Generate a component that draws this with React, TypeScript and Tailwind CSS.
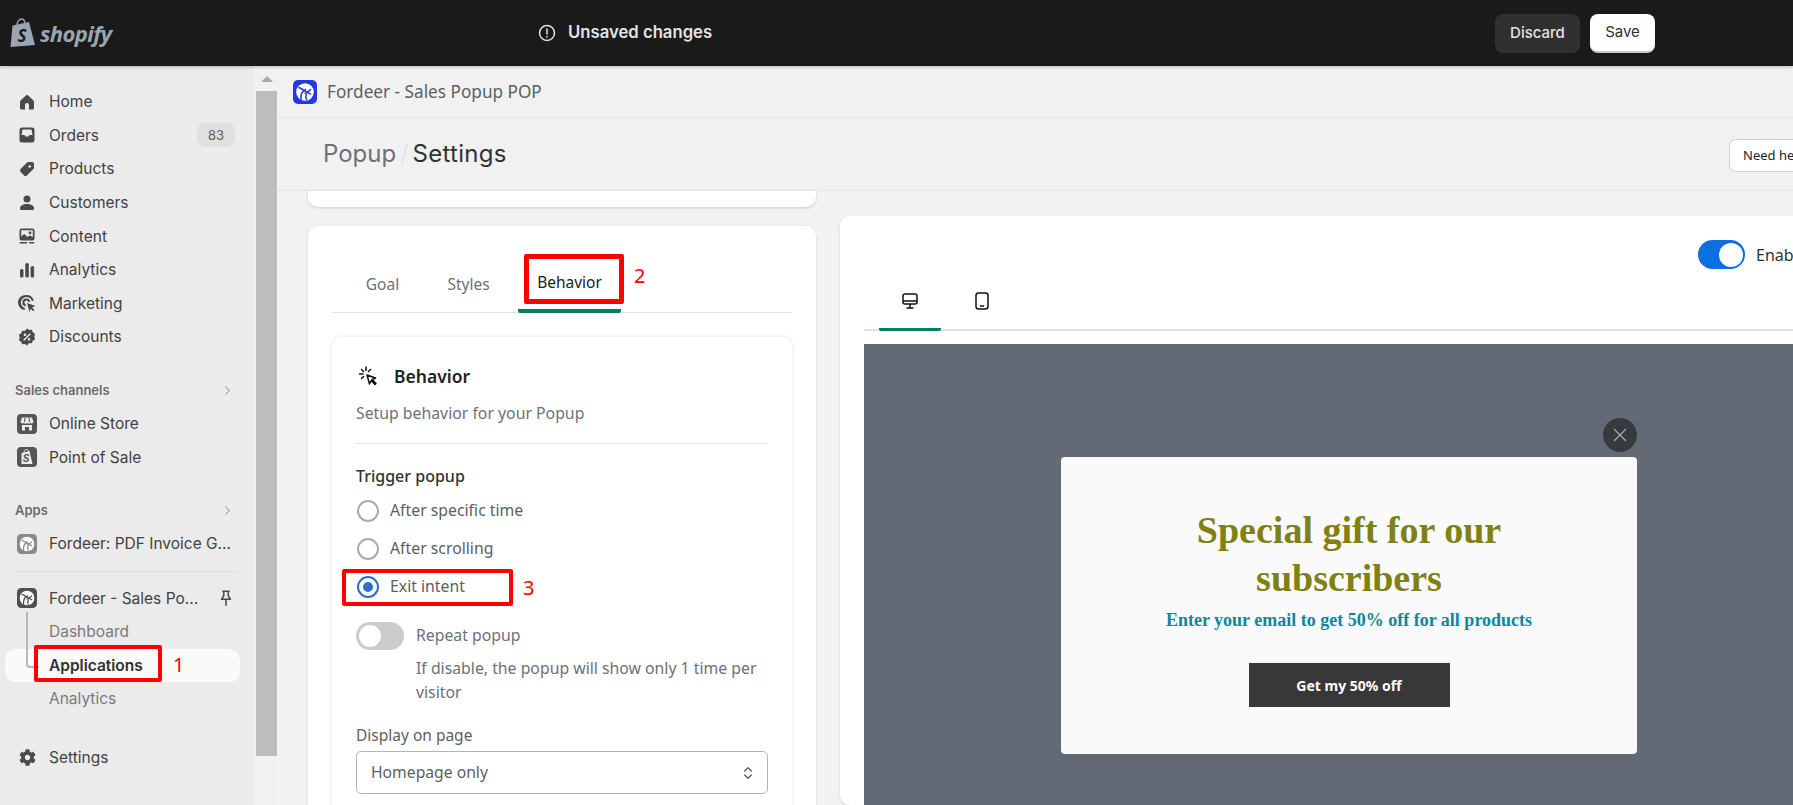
import type { ReactNode } from "react";
import { FaCog } from "react-icons/fa";
import { ChevronRight, ChevronsUpDown, X } from "lucide-react";

const inter = "font-['Inter',sans-serif]";
const noto = "font-['Noto_Sans',sans-serif]";

function Icon({ children }: { children: ReactNode }) {
  return (
    <svg viewBox="0 0 20 20" className="w-[20px] h-[20px] fill-[#4a4a4a] shrink-0">
      {children}
    </svg>
  );
}

function FordeerLogo({ bg, size = 20 }: { bg: string; size?: number }) {
  return (
    <svg viewBox="0 0 24 24" width={size} height={size} className="shrink-0">
      <rect width="24" height="24" rx="5" fill={bg} />
      <circle cx="12" cy="12" r="8.800" fill="#fff" />
      <path d="M6 7.500 17.500 14M8 20c-.5-5 1-9 4.500-10.500M12 13.500c2-1 3.500-1.500 5.500-4M13.500 14.500c-1 1.500-1 3 0 5" stroke={bg} strokeWidth="1.500" fill="none" strokeLinecap="round" />
    </svg>
  );
}

const mainNav: { label: string; icon: ReactNode; badge?: string }[] = [
  { label: "Home", icon: <Icon><path d="M10 3c-.4 0-.8.2-1.100.4L4 8c-.6.6-1 1.300-1 2.200V16c0 .8.700 1.500 1.500 1.500H8V13a2 2 0 0 1 4 0v4.500h3.500c.8 0 1.500-.7 1.500-1.500v-5.800c0-.9-.4-1.600-1-2.200l-4.900-4.600C10.800 3.200 10.400 3 10 3z" /></Icon> },
  { label: "Orders", badge: "83", icon: <Icon><path fillRule="evenodd" d="M5 2.500h10A2.500 2.500 0 0 1 17.500 5v10a2.500 2.500 0 0 1-2.500 2.500H5A2.500 2.500 0 0 1 2.500 15V5A2.500 2.500 0 0 1 5 2.500zM5.500 4.500 4.500 10h3l1 1.500h3l1-1.500h3l-1-5.500z" /></Icon> },
  { label: "Products", icon: <Icon><path fillRule="evenodd" d="M11.500 3H15a2 2 0 0 1 2 2v3.500c0 .5-.2 1-.6 1.400l-6.500 6.500a2 2 0 0 1-2.800 0L3.600 12.900a2 2 0 0 1 0-2.800l6.500-6.500c.4-.4.9-.6 1.400-.6zM14 7.500a1.300 1.300 0 1 0-2.600 0 1.300 1.300 0 0 0 2.600 0z" /></Icon> },
  { label: "Customers", icon: <Icon><circle cx="10" cy="6" r="3.500" /><path d="M3 15.500c0-2.800 3-4.500 7-4.500s7 1.700 7 4.500c0 1-.7 1.500-1.500 1.500h-11C3.700 17 3 16.500 3 15.500z" /></Icon> },
  { label: "Content", icon: <Icon><path fillRule="evenodd" d="M4.500 2.500h11A2 2 0 0 1 17.500 4.500v8a2 2 0 0 1-2 2h-11a2 2 0 0 1-2-2v-8a2 2 0 0 1 2-2zM4.200 4.200v6.300l3-2.500 3.300 3 2.300-1.800 3 2V4.200zM13 5.500a1.400 1.400 0 1 1 0 2.800 1.400 1.400 0 0 1 0-2.800z" /><rect x="2.500" y="16" width="8" height="1.600" rx=".8" /><rect x="12" y="16" width="5.500" height="1.600" rx=".8" /></Icon> },
  { label: "Analytics", icon: <Icon><rect x="3" y="9" width="3.500" height="8.500" rx="1.500" /><rect x="8.300" y="3" width="3.500" height="14.500" rx="1.500" /><rect x="13.600" y="6" width="3.500" height="11.500" rx="1.500" /></Icon> },
  { label: "Marketing", icon: <Icon><path d="M9.500 2a7.500 7.500 0 0 1 7.300 5.700l-1.900.4A5.600 5.600 0 1 0 8 15l-.4 2A7.500 7.500 0 0 1 9.500 2z" /><path d="M9.500 5.500a4 4 0 0 1 3.900 3l-2 .4a2 2 0 1 0-2.500 2.500l-.4 2a4 4 0 0 1 1-7.900z" /><path d="m10 10 8.500 3-3.400 1.500 2.400 2.500-1.200 1.200-2.400-2.500L12.500 19z" /></Icon> },
  { label: "Discounts", icon: <Icon><path fillRule="evenodd" d="m10 1.500 2.200 1.500 2.700-.2.900 2.500 2.300 1.500-.8 2.700.8 2.700-2.300 1.500-.9 2.500-2.700-.2L10 18.500l-2.200-1.500-2.700.2-.9-2.500-2.300-1.500.8-2.700-.8-2.700 2.300-1.500.9-2.500 2.700.2zM8 6.500a1.300 1.300 0 1 0 0 2.600 1.300 1.300 0 0 0 0-2.600zm4 4.400a1.300 1.300 0 1 0 0 2.600 1.300 1.300 0 0 0 0-2.600zM12.800 6.200 6.200 12.800l1 1 6.600-6.600z" /></Icon> },
];

function NavRow({ icon, label, badge }: { icon: ReactNode; label: string; badge?: string }) {
  return (
    <div className="h-[33.6px] flex items-center pl-[17px] pr-[19px] text-[15.500px] text-[#424242]">
      {icon}
      <span className="ml-[12px] flex-1 whitespace-nowrap">{label}</span>
      {badge && (
        <span className="w-[38px] h-[24px] rounded-lg bg-[#e0e0e0] text-[13px] text-[#616161] flex items-center justify-center">{badge}</span>
      )}
    </div>
  );
}

function SectionHead({ label }: { label: string }) {
  return (
    <div className="h-[33px] flex items-center justify-between pl-[15px] pr-[19px] text-[13px] font-semibold text-[#6b6b6b]">
      <span>{label}</span>
      <ChevronRight size={15} strokeWidth={1.6} className="text-[#8a8a8a]" />
    </div>
  );
}

function Sidebar() {
  return (
    <aside className={`w-[254px] shrink-0 bg-[#ebebeb] pt-[19px] ${inter}`}>
      {mainNav.map((n) => (
        <NavRow key={n.label + "m"} {...n} />
      ))}
      <div className="mt-[20px]">
        <SectionHead label="Sales channels" />
      </div>
      <NavRow
        label="Online Store"
        icon={
          <svg viewBox="0 0 20 20" className="w-[20px] h-[20px] shrink-0">
            <rect width="20" height="20" rx="4" fill="#555" />
            <path d="M5 3.500h10l1.500 4.500a2 2 0 0 1-3.200 1 2.400 2.400 0 0 1-3.300 0 2.400 2.400 0 0 1-3.300 0A2 2 0 0 1 3.500 8z" fill="#ebebeb" />
            <path d="M8 3.500 7.500 8M12 3.500 12.500 8" stroke="#555" strokeWidth="1" />
            <path d="M5 11h10v5.500h-3V13H8v3.500H5z" fill="#ebebeb" />
          </svg>
        }
      />
      <NavRow
        label="Point of Sale"
        icon={
          <svg viewBox="0 0 20 20" className="w-[20px] h-[20px] shrink-0">
            <rect width="20" height="20" rx="4" fill="#555" />
            <path d="M4.500 6 12.500 4l3 13-11 0z" fill="#ebebeb" />
            <path d="M7 6c0-2 1-3.500 2.500-3.500S12 4 12 5.500" fill="none" stroke="#ebebeb" strokeWidth="1" />
            <text x="9" y="15" fontSize="10" fontWeight="700" fontStyle="italic" textAnchor="middle" fill="#555" fontFamily="Inter">S</text>
          </svg>
        }
      />
      <div className="mt-[20px]">
        <SectionHead label="Apps" />
      </div>
      <NavRow label="Fordeer: PDF Invoice G..." icon={<FordeerLogo bg="#8a8a8a" />} />
      <div className="mx-[15px] mt-[10px] mb-[10px] border-t border-[#dedede]" />
      <div className="relative">
        <div className="h-[33.6px] flex items-center pl-[17px] pr-[19px] text-[15.500px] text-[#424242]">
          <FordeerLogo bg="#4f4f4f" />
          <span className="ml-[12px] flex-1 whitespace-nowrap">Fordeer - Sales Po...</span>
          <svg viewBox="0 0 20 20" className="w-[18px] h-[18px] fill-none stroke-[#4a4a4a] stroke-[1.7]">
            <path d="M6.500 2.500h7M7.500 2.500v5L5 11.500h10l-2.500-4v-5M10 11.500V18" strokeLinecap="round" strokeLinejoin="round" />
          </svg>
        </div>
        <div className="absolute left-[26px] top-[30px] w-[13px] h-[56px] border-l-2 border-b-2 border-[#b8b8b8] rounded-bl-[4px]" />
        <div className="h-[33.6px] pl-[49px] flex items-center text-[15.500px] text-[#7a7a7a]">Dashboard</div>
        <div className="ml-[5px] mr-[14px] h-[33.6px] pl-[44px] flex items-center rounded-[10px] bg-[#fafafa] text-[15.500px] font-semibold text-[#303030]">Applications</div>
        <div className="h-[33.6px] pl-[49px] flex items-center text-[15.500px] text-[#7a7a7a]">Analytics</div>
      </div>
      <div className="mt-[25px]">
        <NavRow label="Settings" icon={<span className="w-[20px] flex justify-center"><FaCog size={17} className="text-[#4a4a4a]" /></span>} />
      </div>
    </aside>
  );
}

function Radio({ label, checked }: { label: string; checked?: boolean }) {
  return (
    <div className="h-[38px] flex items-center text-[15.800px] text-[#5c5f62] pl-px">
      <span className={`w-[22px] h-[22px] rounded-full border-2 flex items-center justify-center ${checked ? "border-[#2c6ecb]" : "border-[#a6acb2]"}`}>
        {checked && <span className="w-[10px] h-[10px] rounded-full bg-[#2c6ecb]" />}
      </span>
      <span className="ml-[11px]">{label}</span>
    </div>
  );
}

function SettingsCard() {
  return (
    <div className="mt-[19px] rounded-[10px] bg-white shadow-[0_1px_3px_rgba(0,0,0,0.12)] px-[24px] pb-[24px]">
      <div className="h-[87px] border-b border-[#dfe3e8] flex items-end pl-[14px] text-[15.500px]">
        <div className="h-[54px] w-[73px] flex items-center justify-center text-[#6d7175]">Goal</div>
        <div className="h-[54px] w-[99px] flex items-center justify-center text-[#6d7175]">Styles</div>
        <div className="h-[56px] w-[103px] -mb-px flex items-center justify-center border-b-4 border-[#008060] rounded-b-[2px] text-[#202223]">Behavior</div>
      </div>
      <div className="mt-[24px] rounded-[10px] bg-white shadow-[0_0_5px_rgba(0,0,0,0.10)] px-[24px] pt-[20px] pb-[40px]">
        <div className="h-[38px] flex items-center">
          <svg viewBox="0 0 20 20" className="w-[20px] h-[20px] ml-[2px] fill-none stroke-[#111] stroke-[1.500]">
            <path d="M8 1v3.500M1.500 8H5M3.500 3.500 5.500 5.500M12.500 3.500l-2 2M3.500 12.500l2-2" strokeLinecap="round" />
            <path d="m9 9 8.500 3-3.300 1.500L18 17.500l-1 1-3.800-4L11.500 18z" strokeLinejoin="round" />
          </svg>
          <span className="ml-[16px] text-[17.500px] font-semibold text-[#202223]">Behavior</span>
        </div>
        <p className="mt-[7px] text-[15.800px] leading-[22px] text-[#6d7175]">Setup behavior for your Popup</p>
        <div className="mt-[19px] border-t border-[#e1e3e5]" />
        <p className="mt-[20px] text-[16px] leading-[24px] font-medium text-[#303336]">Trigger popup</p>
        <div className="mt-[4px]">
          <Radio label="After specific time" />
          <Radio label="After scrolling" />
          <Radio label="Exit intent" checked />
        </div>
        <div className="mt-[16px] flex">
          <div className="w-[48px] h-[28px] rounded-full bg-[#cccccc] p-[3px] shrink-0">
            <div className="w-[22px] h-[22px] rounded-full bg-white" />
          </div>
          <div className="ml-[12px] text-[15.800px] leading-[24px] text-[#6d7175]">
            <p className="leading-[26px]">Repeat popup</p>
            <p className="mt-[8px]">If disable, the popup will show only 1 time per visitor</p>
          </div>
        </div>
        <p className="mt-[19px] text-[15.500px] leading-[24px] text-[#5c5f62]">Display on page</p>
        <div className="mt-[4px] h-[43px] rounded-[5px] border border-[#aeb4b9] flex items-center justify-between pl-[14px] pr-[11px] text-[15.700px] text-[#5c5f62]">
          <span>Homepage only</span>
          <ChevronsUpDown size={16} strokeWidth={1.8} className="text-[#4a4f54]" />
        </div>
      </div>
    </div>
  );
}

function PreviewCard() {
  return (
    <div className="w-[1000px] shrink-0 mt-[25px] rounded-[10px] bg-white shadow-[0_1px_3px_rgba(0,0,0,0.12)] px-[24px] pt-[24px] pb-[40px]">
      <div className="flex items-center pl-[834px]">
        <div className="w-[47px] h-[29px] rounded-full bg-[#0b6fe0] flex items-center justify-end pr-[2px] shrink-0">
          <div className="w-[24px] h-[24px] rounded-full bg-white" />
        </div>
        <span className="ml-[11px] text-[16px] whitespace-nowrap text-[#303336]">Enable popup</span>
      </div>
      <div className="h-[62px] border-b-2 border-[#e1e3e5] flex items-end pl-[15px]">
        <div className="h-[62px] w-[62px] -mb-[2px] pt-[5px] flex items-center justify-center border-b-[3px] border-[#008060] rounded-b-[2px]">
          <svg viewBox="0 0 16 16" className="w-[16px] h-[16px] fill-none stroke-[#111] stroke-[1.500]">
            <rect x="1" y="1" width="14" height="10" rx="2" />
            <path d="M1 8h14M8 11v4M4.500 15h7" />
          </svg>
        </div>
        <div className="h-[62px] w-[82px] pt-[5px] flex items-center justify-center">
          <svg viewBox="0 0 14 18" className="w-[14px] h-[18px] fill-none stroke-[#111] stroke-[1.500]">
            <rect x="1" y="1" width="12" height="16" rx="2.500" />
            <path d="M5 14h4" />
          </svg>
        </div>
      </div>
      <div className="mt-[13px] h-[560px] bg-[#636a75] pt-[113px] pl-[197px]">
        <div className="relative w-[576px] h-[297px] rounded-[4px] bg-[#fafafa] pt-[49px] flex flex-col items-center">
          <div className="absolute right-0 -top-[39px] w-[34px] h-[34px] rounded-full bg-[#363a3f] flex items-center justify-center">
            <X size={22} strokeWidth={1.4} className="text-[#a5a9ad]" />
          </div>
          <h2 className="w-[340px] text-center font-['Liberation_Serif',serif] font-bold text-[38px] leading-[48px] text-[#808014]">
            Special gift for our subscribers
          </h2>
          <p className="mt-[6px] font-['Liberation_Serif',serif] font-bold text-[18px] leading-[24px] text-[#0f8799]">
            Enter your email to get 50% off for all products
          </p>
          <div className={`mt-[31px] w-[201px] h-[44px] bg-[#383838] flex items-center justify-center text-[14px] font-bold text-white ${noto}`}>
            Get my 50% off
          </div>
        </div>
      </div>
    </div>
  );
}

export default function App() {
  return (
    <div className="relative w-[1793px] h-[805px] overflow-hidden flex flex-col bg-[#f1f2f4]">
      {/* top bar */}
      <header className="h-[66px] shrink-0 bg-[#1a1a1a] flex items-center shadow-[0_1px_3px_rgba(0,0,0,0.25)] z-10">
        <div className="w-[537px] pl-[10px] flex items-center shrink-0">
          <svg viewBox="0 0 26 30" className="w-[26px] h-[30px]">
            <path d="M2 7.500 18.500 4 24.500 27 0 29z" fill="#9aa5b1" transform="translate(.5 0)" />
            <path d="M7 7c0-3 2-6 4.500-6S15 3 15 6" fill="none" stroke="#9aa5b1" strokeWidth="1.300" />
            <text x="12" y="24" fontSize="17" fontWeight="700" fontStyle="italic" textAnchor="middle" fill="#1a1a1a" fontFamily="Open Sans">S</text>
          </svg>
          <span className="ml-[4px] font-['Open_Sans',sans-serif] font-bold italic text-[22px] tracking-[-0.6px] text-[#9aa5b1]">shopify</span>
        </div>
        <div className={`flex items-center text-[#e3e3e3] ${inter}`}>
          <svg viewBox="0 0 20 20" className="w-[20px] h-[20px] fill-none stroke-[#e3e3e3] stroke-[1.500]">
            <circle cx="10" cy="10" r="7.500" />
            <path d="M10 6v5M10 13.500v.5" strokeLinecap="round" />
          </svg>
          <span className="ml-[11px] text-[16.700px] font-semibold">Unsaved changes</span>
        </div>
        <div className={`ml-auto mr-[138px] flex gap-[10px] text-[15px] font-medium ${inter}`}>
          <div className="w-[85px] h-[39px] rounded-lg bg-[#303030] text-[#e3e3e3] flex items-center justify-center">Discard</div>
          <div className="w-[65px] h-[39px] rounded-lg bg-white text-[#303030] font-normal border-b-2 border-[#c8c8c8] flex items-center justify-center">Save</div>
        </div>
      </header>

      <div className="flex flex-1 min-h-0">
        <Sidebar />

        {/* scrollbar */}
        <div className="w-[24px] shrink-0 bg-[#f1f1f1] pl-[2px] pr-px flex flex-col">
          <div className="h-[25px] flex items-center justify-center">
            <div className="w-0 h-0 border-x-[6px] border-x-transparent border-b-[6px] border-b-[#a8a8a8]" />
          </div>
          <div className="h-[665px] bg-[#bdbdbd]" />
        </div>

        <main className="flex-1 min-w-0 overflow-hidden flex flex-col">
          <div className="h-[52px] shrink-0 bg-[#f1f1f1] border-b border-[#e6e6e6] flex items-center pl-[15px]">
            <FordeerLogo bg="#2438e0" size={24} />
            <span className={`ml-[10px] mt-px text-[17.200px] text-[#5c5f62] ${noto}`}>Fordeer - Sales Popup POP</span>
          </div>
          <div className={`h-[73px] shrink-0 bg-[#f1f1f1] border-b border-[#e6e6e6] flex items-center pl-[45px] pr-0 text-[24px] ${inter}`}>
            <span className="text-[#6d7175]">Popup</span>
            <span className="mx-[4px] text-[#e2e2e2] font-light">/</span>
            <span className="text-[#303336] tracking-[0.3px]">Settings</span>
            <div className={`ml-auto mt-[3px] w-[80px] h-[33px] -mr-[16px] rounded-l-[7px] bg-white border border-[#d0d3d6] border-r-0 pl-[13px] flex items-center text-[13px] whitespace-nowrap text-[#202223] ${noto}`}>
              Need help?
            </div>
          </div>
          <div className={`flex-1 min-h-0 flex pl-[30px] gap-[24px] ${noto}`}>
            <div className="w-[508px] shrink-0">
              <div className="h-[16px] rounded-b-[10px] bg-white shadow-[0_1px_3px_rgba(0,0,0,0.15)]" />
              <SettingsCard />
            </div>
            <PreviewCard />
          </div>
        </main>
      </div>

      {/* red annotations added over the screenshot */}
      <div className={`pointer-events-none text-[#ff0000] text-[20px] ${noto}`}>
        <div className="absolute left-[34px] top-[645px] w-[128px] h-[37px] border-[4px] border-[#ff0000] rounded-[2px]" />
        <span className="absolute left-[173px] top-[650px]">1</span>
        <div className="absolute left-[524px] top-[254px] w-[100px] h-[50px] border-[5px] border-[#ff0000] rounded-[2px]" />
        <span className="absolute left-[634px] top-[261px]">2</span>
        <div className="absolute left-[342px] top-[569px] w-[171px] h-[37px] border-[4px] border-[#ff0000] rounded-[2px]" />
        <span className="absolute left-[523px] top-[573px]">3</span>
      </div>
    </div>
  );
}
